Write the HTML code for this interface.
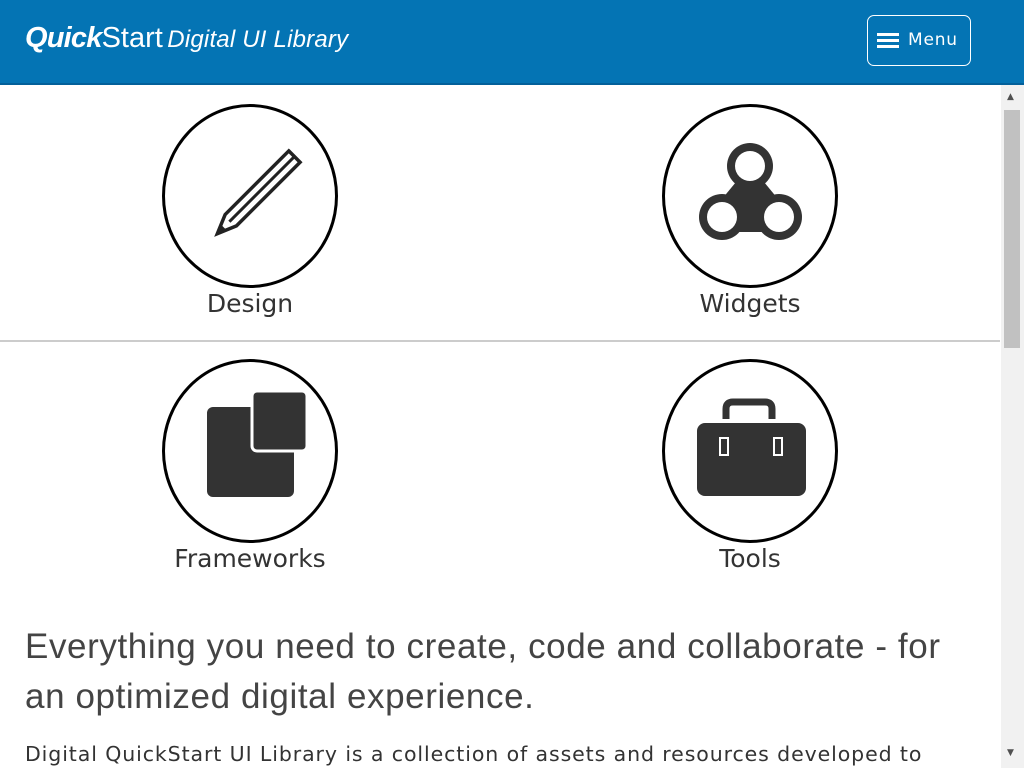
<!DOCTYPE html>
<html><head><style>
body{margin:0;width:1024px;height:768px;overflow:hidden;background:#fff;font-family:"DejaVu Sans",sans-serif;position:relative}
.hdr{position:absolute;left:0;top:0;width:1024px;height:83px;background:#0474b4;border-bottom:2px solid #03609a}
.logo{position:absolute;left:25px;top:22px;color:#fff;font-family:"Liberation Sans",sans-serif;white-space:nowrap}
.menu{position:absolute;left:867px;top:15px;width:104px;height:51px;border:1.5px solid #fff;border-radius:7px;color:#fff;box-sizing:border-box}
.sb{position:absolute;left:1001px;top:85px;width:23px;height:683px;background:#f1f1f1}
.thumb{position:absolute;left:1004px;top:110px;width:16px;height:238px;background:#c1c1c1}
.lbl{position:absolute;width:300px;text-align:center;font-size:25px;color:#333}
.circ{position:absolute;width:176px;height:184px;border:3px solid #000;border-radius:50%;box-sizing:border-box}
svg{position:absolute}
</style></head><body>
<div class="hdr">
 <div class="logo"><span style="font-weight:bold;font-style:italic;font-size:29px;letter-spacing:-0.8px">Quick</span><span style="font-size:29px;letter-spacing:0px">Start</span> <span style="font-size:24px;font-style:italic;letter-spacing:0.2px">Digital UI Library</span></div>
 <div class="menu">
  <div style="position:absolute;left:9px;top:17px;width:22px;height:3px;background:#fff;box-shadow:0 6px 0 #fff,0 12px 0 #fff"></div>
  <div style="position:absolute;left:40px;top:14px;font-size:17px;letter-spacing:0.8px">Menu</div>
 </div>
</div>
<div class="sb"></div><div class="thumb"></div>
<div style="position:absolute;left:1007px;top:92px;font-size:9px;color:#505050">▲</div>
<div style="position:absolute;left:1007px;top:748px;font-size:9px;color:#505050">▼</div>
<div style="position:absolute;left:0;top:340px;width:1000px;height:2px;background:#ccc"></div>

<div class="circ" style="left:162px;top:104px"></div>
<svg style="left:162px;top:104px" width="176" height="184" viewBox="0 0 176 184">
 <g transform="translate(90,95) rotate(45)">
  <path d="M-8,-60 L8,-60 L8,30 L0,49 L-8,30 Z" fill="none" stroke="#222" stroke-width="3.5"/>
  <line x1="0" y1="-60" x2="0" y2="32" stroke="#222" stroke-width="3"/>
  <path d="M-4,40 L4,40 L0,49Z" fill="#222"/>
 </g>
</svg>
<div class="lbl" style="left:100px;top:289px">Design</div>

<div class="circ" style="left:662px;top:104px"></div>
<svg style="left:662px;top:104px" width="176" height="184" viewBox="0 0 176 184">
 <g fill="#333">
  <circle cx="88" cy="62" r="23"/><circle cx="60" cy="113" r="23"/><circle cx="117" cy="113" r="23"/>
  <path d="M74,78 L102,78 L116,95 L106,128 L70,128 L60,95 Z"/>
 </g>
 <g fill="#fff"><circle cx="88" cy="62" r="15"/><circle cx="60" cy="113" r="15"/><circle cx="117" cy="113" r="15"/></g>
</svg>
<div class="lbl" style="left:600px;top:289px">Widgets</div>

<div class="circ" style="left:162px;top:359px"></div>
<svg style="left:162px;top:359px" width="176" height="184" viewBox="0 0 176 184">
 <rect x="45" y="48" width="87" height="90" rx="6" fill="#333"/>
 <rect x="90" y="32" width="55" height="60" rx="5" fill="#333" stroke="#fff" stroke-width="3"/>
</svg>
<div class="lbl" style="left:100px;top:544px">Frameworks</div>

<div class="circ" style="left:662px;top:359px"></div>
<svg style="left:662px;top:359px" width="176" height="184" viewBox="0 0 176 184">
 <path d="M64,60 L64,50 Q64,43 71,43 L103,43 Q110,43 110,50 L110,60" fill="none" stroke="#333" stroke-width="7"/>
 <rect x="35" y="64" width="109" height="73" rx="8" fill="#333"/>
 <rect x="57" y="78" width="10" height="19" fill="#fff"/><rect x="111" y="78" width="10" height="19" fill="#fff"/>
 <rect x="59" y="80" width="6" height="15" fill="#333"/><rect x="113" y="80" width="6" height="15" fill="#333"/>
</svg>
<div class="lbl" style="left:600px;top:544px">Tools</div>

<div style="position:absolute;left:25px;top:622px;font-family:'Liberation Sans',sans-serif;font-size:35px;color:#444;line-height:50px;letter-spacing:0.6px;width:940px">Everything you need to create, code and collaborate - for an optimized digital experience.</div>
<div style="position:absolute;left:25px;top:742px;font-size:20.5px;color:#333;white-space:nowrap;letter-spacing:0.9px">Digital QuickStart UI Library is a collection of assets and resources developed to</div>
</body></html>
